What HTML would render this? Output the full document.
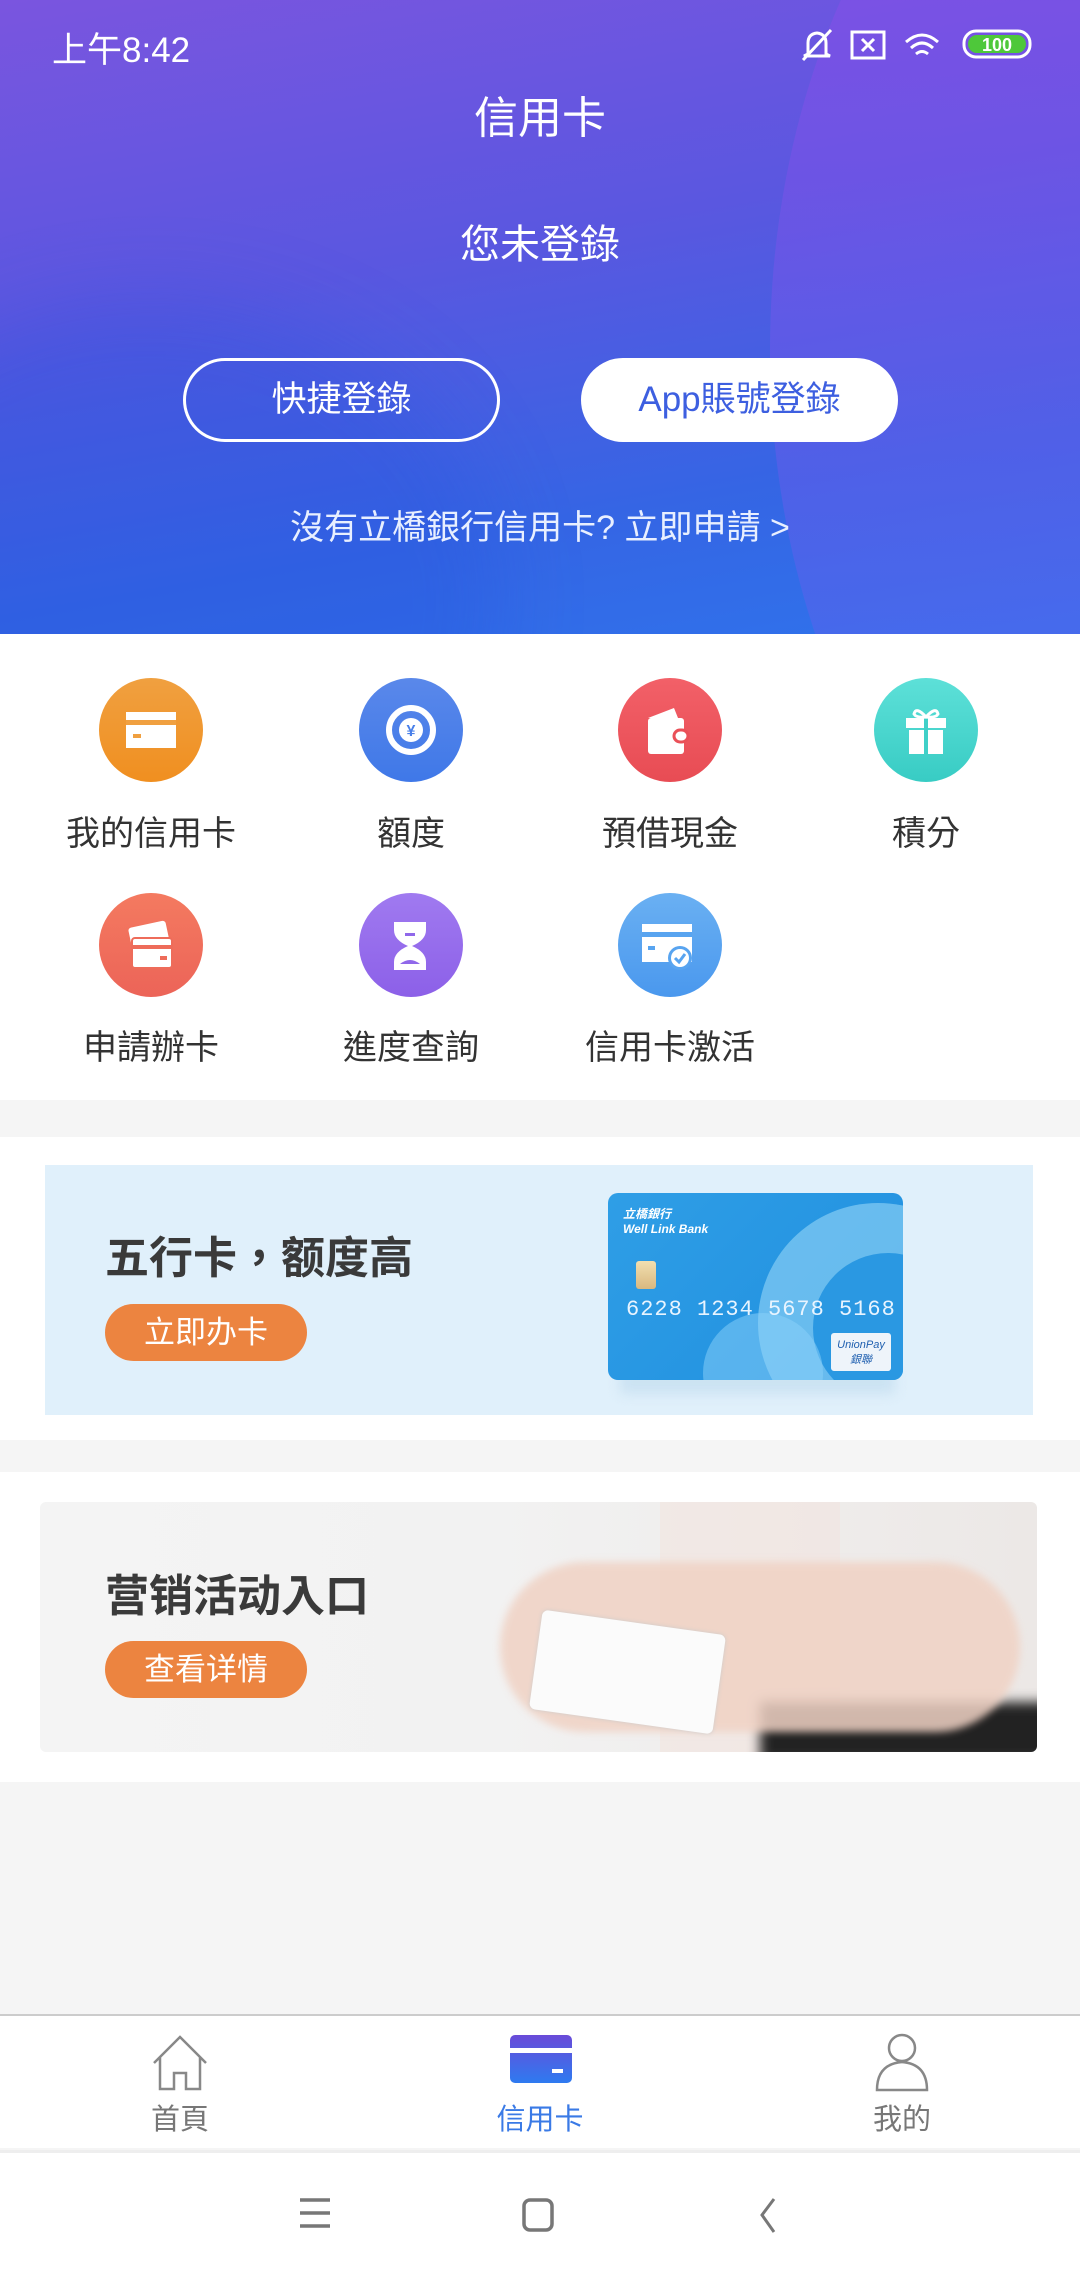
<!DOCTYPE html>
<html><head><meta charset="utf-8">
<style>
*{margin:0;padding:0;box-sizing:border-box}
body{width:1080px;height:2280px;background:#f5f5f5;font-family:"Liberation Sans","Noto Sans CJK TC",sans-serif;position:relative;overflow:hidden}
.abs{position:absolute}
.hdr{left:0;top:0;width:1080px;height:634px;overflow:hidden;background:linear-gradient(170deg,#7a55df 0%,#5a57e0 40%,#3565e4 75%,#2f73ec 100%)}
.c{text-align:center;color:#fff;white-space:nowrap}
.grid{left:0;top:634px;width:1080px;height:466px;background:#fff}
.ic{width:104px;height:104px;border-radius:50%}
.lbl{width:260px;text-align:center;font-size:34px;color:#333}
.sec{left:0;width:1080px;background:#fff}
.btn{border-radius:30px;background:#ec8440;color:#fff;font-size:31px;text-align:center;line-height:57px;width:202px;height:57px}
</style></head><body>
<div class="abs hdr">
  <div class="abs" style="left:770px;top:-300px;width:900px;height:1300px;border-radius:50%;background:linear-gradient(180deg,rgba(150,70,230,0.55),rgba(70,110,240,0.4));"></div>
  <div class="abs" style="left:-200px;top:300px;width:700px;height:600px;border-radius:50%;background:rgba(30,80,220,0.25);filter:blur(40px)"></div>
  <div class="abs" style="left:52px;top:22px;color:#fff;font-size:35px">上午8:42</div>
  <svg class="abs" style="left:800px;top:26px" width="240" height="40" viewBox="0 0 240 40">
    <g fill="none" stroke="#fff" stroke-width="3">
      <path d="M8 28 L8 17 Q8 8 17 7 Q26 8 26 17 L26 28 L30 30 L4 30 Z"/><path d="M3 34 L31 4"/>
      <rect x="52" y="6" width="32" height="26"/><path d="M62 13 L74 25 M74 13 L62 25"/>
      <path d="M106 16 Q122 2 138 16 M111 22 Q122 12 133 22 M116 28 Q122 23 128 28"/>
    </g>
    <rect x="164" y="5" width="66" height="26" rx="12" fill="none" stroke="#fff" stroke-width="3"/>
    <rect x="168" y="9" width="58" height="18" rx="9" fill="#4ec83a"/>
    <text x="197" y="25" font-size="18" fill="#fff" text-anchor="middle" font-family="Liberation Sans" font-weight="bold">100</text>
  </svg>
  <div class="abs c" style="left:0;width:1080px;top:82px;font-size:44px">信用卡</div>
  <div class="abs c" style="left:0;width:1080px;top:212px;font-size:40px">您未登錄</div>
  <div class="abs c" style="left:183px;top:358px;width:317px;height:84px;border:3px solid #fff;border-radius:42px;font-size:35px;line-height:78px">快捷登錄</div>
  <div class="abs c" style="left:581px;top:358px;width:317px;height:84px;background:#fff;border-radius:42px;font-size:35px;line-height:84px;color:#3d5fe0">App賬號登錄</div>
  <div class="abs c" style="left:0;width:1080px;top:500px;font-size:34px;color:#e8efff">沒有立橋銀行信用卡? 立即申請 &gt;</div>
</div>

<div class="abs grid"></div>
<!-- row1 -->
<div class="abs ic" style="left:99px;top:678px;background:linear-gradient(#f0a040,#f08f20)"></div>
<svg class="abs" style="left:125px;top:706px" width="52" height="48"><rect x="1" y="6" width="50" height="36" fill="#fff"/><rect x="1" y="14" width="50" height="5" fill="#f0a040"/><rect x="8" y="28" width="8" height="4" fill="#f0a040"/></svg>
<div class="abs ic" style="left:359px;top:678px;background:linear-gradient(#5a88ea,#3f78e8)"></div>
<svg class="abs" style="left:381px;top:700px" width="60" height="60"><circle cx="30" cy="30" r="22" fill="none" stroke="#fff" stroke-width="6"/><circle cx="30" cy="30" r="12" fill="#fff"/><text x="30" y="36" font-size="16" fill="#4a80e9" text-anchor="middle" font-weight="bold">¥</text></svg>
<div class="abs ic" style="left:618px;top:678px;background:linear-gradient(#f26068,#e84c54)"></div>
<svg class="abs" style="left:644px;top:704px" width="52" height="54"><path d="M4 14 L30 4 L34 14 Z" fill="#fff"/><rect x="4" y="14" width="36" height="36" rx="3" fill="#fff"/><rect x="30" y="26" width="14" height="12" rx="6" fill="#fff" stroke="#ea5058" stroke-width="3"/></svg>
<div class="abs ic" style="left:874px;top:678px;background:linear-gradient(#5de0d8,#38ccc4)"></div>
<svg class="abs" style="left:902px;top:704px" width="48" height="54"><rect x="4" y="14" width="40" height="10" fill="#fff"/><rect x="7" y="26" width="34" height="24" fill="#fff"/><rect x="22" y="14" width="4" height="36" fill="#40d0c8"/><path d="M24 13 Q14 2 12 10 Q14 14 24 13 Q34 2 36 10 Q34 14 24 13" fill="none" stroke="#fff" stroke-width="3"/></svg>
<div class="abs lbl" style="left:21px;top:806px">我的信用卡</div>
<div class="abs lbl" style="left:281px;top:806px">額度</div>
<div class="abs lbl" style="left:540px;top:806px">預借現金</div>
<div class="abs lbl" style="left:796px;top:806px">積分</div>
<!-- row2 -->
<div class="abs ic" style="left:99px;top:893px;background:linear-gradient(#f47a60,#ec6458)"></div>
<svg class="abs" style="left:124px;top:916px" width="56" height="60"><rect x="6" y="8" width="38" height="24" rx="3" fill="#fff" transform="rotate(-12 25 20)"/><rect x="8" y="22" width="40" height="30" rx="3" fill="#fff" stroke="#ee6c5a" stroke-width="2"/><rect x="8" y="29" width="40" height="4" fill="#ee6c5a"/><rect x="36" y="40" width="7" height="4" fill="#ee6c5a"/></svg>
<div class="abs ic" style="left:359px;top:893px;background:linear-gradient(#a07af0,#8c60e8)"></div>
<svg class="abs" style="left:390px;top:918px" width="44" height="56"><path d="M4 4 H36 V12 Q36 22 22 28 Q36 34 36 44 V52 H4 V44 Q4 34 18 28 Q4 22 4 12 Z" fill="#fff"/><path d="M10 46 Q20 38 30 46 Z" fill="#9068ea"/><rect x="15" y="15" width="10" height="3" fill="#9068ea"/></svg>
<div class="abs ic" style="left:618px;top:893px;background:linear-gradient(#6ab0f2,#4a98ee)"></div>
<svg class="abs" style="left:640px;top:918px" width="60" height="56"><rect x="2" y="6" width="50" height="38" fill="#fff"/><rect x="2" y="14" width="50" height="5" fill="#58a4f0"/><rect x="8" y="28" width="7" height="4" fill="#58a4f0"/><circle cx="40" cy="40" r="12" fill="#58a4f0"/><circle cx="40" cy="40" r="9" fill="#fff"/><path d="M35 40 L39 44 L45 36" stroke="#58a4f0" stroke-width="3" fill="none"/></svg>
<div class="abs lbl" style="left:21px;top:1020px">申請辦卡</div>
<div class="abs lbl" style="left:281px;top:1020px">進度查詢</div>
<div class="abs lbl" style="left:540px;top:1020px">信用卡激活</div>

<!-- banner section 1 -->
<div class="abs sec" style="top:1137px;height:303px"></div>
<div class="abs" style="left:45px;top:1165px;width:988px;height:250px;background:#e0f0fb"></div>
<div class="abs" style="left:105px;top:1222px;font-size:44px;color:#3a3a3a;font-weight:bold">五行卡，额度高</div>
<div class="abs btn" style="left:105px;top:1304px">立即办卡</div>
<div class="abs" style="left:620px;top:1370px;width:275px;height:24px;background:#cbe2f2;filter:blur(6px)"></div>
<div class="abs" style="left:608px;top:1193px;width:295px;height:187px;border-radius:10px;overflow:hidden;background:linear-gradient(135deg,#2f9ee6,#1f8fdf)">
  <div class="abs" style="left:150px;top:10px;width:240px;height:240px;border-radius:50%;background:rgba(160,220,250,0.55)"></div>
  <div class="abs" style="left:205px;top:60px;width:150px;height:150px;border-radius:50%;background:#2a98e2"></div>
  <div class="abs" style="left:95px;top:120px;width:120px;height:120px;border-radius:50%;background:rgba(140,210,250,0.5)"></div>
  <div class="abs" style="left:15px;top:12px;color:#fff;font-size:12px;font-style:italic;font-weight:bold">立橋銀行<br>Well Link Bank</div>
  <div class="abs" style="left:28px;top:68px;width:20px;height:28px;border-radius:3px;background:linear-gradient(#f2dfb0,#d8b880)"></div>
  <div class="abs" style="left:18px;top:104px;color:#e8f4ff;font-size:22px;font-family:'Liberation Mono',monospace;letter-spacing:1px">6228 1234 5678 5168</div>
  <div class="abs" style="left:223px;top:140px;width:60px;height:38px;background:#eef4fa;border-radius:3px;color:#2060b0;font-size:11px;font-style:italic;text-align:center;padding-top:6px">UnionPay<br>銀聯</div>
</div>

<!-- banner section 2 -->
<div class="abs sec" style="top:1472px;height:310px"></div>
<div class="abs" style="left:40px;top:1502px;width:997px;height:250px;border-radius:6px;overflow:hidden;background:linear-gradient(90deg,#f4f4f4 0%,#f2f2f2 45%,#ece8e6 100%)">
  <div class="abs" style="left:620px;top:0;width:180px;height:250px;background:#f2e4e0;opacity:.6"></div>
  <div class="abs" style="left:720px;top:200px;width:300px;height:60px;background:#222;filter:blur(6px)"></div>
  <div class="abs" style="left:460px;top:60px;width:520px;height:170px;border-radius:90px;background:#f0d2c4;filter:blur(4px);opacity:.85"></div>
  <div class="abs" style="left:495px;top:120px;width:185px;height:100px;background:#fbfbfb;transform:rotate(8deg);border-radius:6px;box-shadow:0 0 4px #ccc"></div>
</div>
<div class="abs" style="left:105px;top:1560px;font-size:44px;color:#3a3a3a;font-weight:bold">营销活动入口</div>
<div class="abs btn" style="left:105px;top:1641px">查看详情</div>

<!-- bottom nav -->
<div class="abs" style="left:0;top:2014px;width:1080px;height:134px;background:#fff;border-top:2px solid #ccc"></div>
<svg class="abs" style="left:150px;top:2035px" width="60" height="56"><path d="M4 28 L30 2 L56 28 M10 22 V54 H24 V38 H36 V54 H50 V22" fill="none" stroke="#888" stroke-width="2.5"/></svg>
<div class="abs" style="left:150px;top:2096px;width:60px;text-align:center;font-size:29px;color:#777">首頁</div>
<svg class="abs" style="left:510px;top:2035px" width="62" height="50"><defs><linearGradient id="g" x1="0" y1="0" x2="0" y2="1"><stop offset="0" stop-color="#6a4ad8"/><stop offset="1" stop-color="#2e7af0"/></linearGradient></defs><rect x="0" y="0" width="62" height="48" rx="5" fill="url(#g)"/><rect x="0" y="13" width="62" height="5" fill="#fff"/><rect x="42" y="34" width="11" height="4" fill="#fff"/></svg>
<div class="abs" style="left:480px;top:2096px;width:120px;text-align:center;font-size:29px;color:#3a7ae6">信用卡</div>
<svg class="abs" style="left:874px;top:2032px" width="56" height="62"><circle cx="28" cy="16" r="13" fill="none" stroke="#888" stroke-width="2.5"/><path d="M3 58 Q3 32 28 30 Q53 32 53 58 Z" fill="none" stroke="#888" stroke-width="2.5"/></svg>
<div class="abs" style="left:860px;top:2096px;width:84px;text-align:center;font-size:29px;color:#777">我的</div>

<!-- system nav -->
<div class="abs" style="left:0;top:2150px;width:1080px;height:130px;background:#fff;border-top:3px solid #eee"></div>
<svg class="abs" style="left:296px;top:2196px" width="40" height="36"><path d="M4 4 H34 M4 17 H34 M4 30 H34" stroke="#777" stroke-width="3.5"/></svg>
<svg class="abs" style="left:520px;top:2196px" width="40" height="40"><rect x="4" y="4" width="28" height="30" rx="6" fill="none" stroke="#777" stroke-width="3.5"/></svg>
<svg class="abs" style="left:752px;top:2196px" width="30" height="40"><path d="M22 3 L10 19 L22 36" fill="none" stroke="#777" stroke-width="3"/></svg>
</body></html>
